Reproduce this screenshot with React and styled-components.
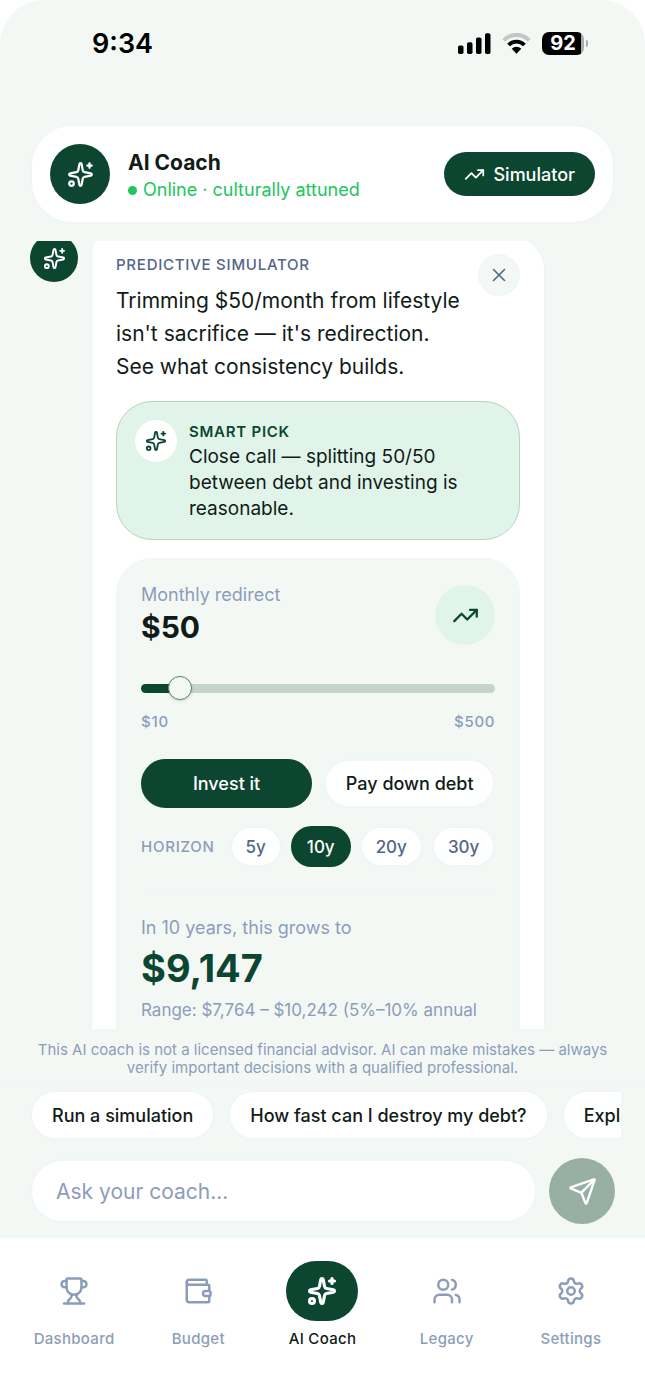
import React, { useState } from "react";
import styled, { createGlobalStyle } from "styled-components";
import {
    Send,
    Settings,
    Sparkles,
    TrendingUp,
    Trophy,
    Users,
    Wallet,
    X,
} from "lucide-react";

const forest = "#0c4631";
const page = "#f4f8f5";
const mint = "#e1f4ea";
const ink = "#111b17";
const muted = "#8c9dba";
const slate = "#536688";
const line = "#f0f5fa";

const GlobalStyle = createGlobalStyle`
    * {
        box-sizing: border-box;
    }
    body {
        margin: 0;
        background-color: white;
        color: ${ink};
        font-family: "Inter", "Liberation Sans", sans-serif;
    }
    button,
    input {
        font-family: inherit;
    }
    h1,
    h2,
    p {
        margin: 0;
    }
`;

const Screen = styled.div`
    height: 100vh;
    display: flex;
    flex-direction: column;
    background-color: ${page};
    border-radius: 44px 44px 0 0;
    overflow: hidden;
`;

const StatusBar = styled.div`
    flex: none;
    height: 124px;
    padding: 26px 57px 0 92px;
    display: flex;
    align-items: flex-start;
    justify-content: space-between;
    color: black;
`;

const Clock = styled.time`
    font-size: 27px;
    line-height: 36px;
    font-weight: 600;
`;

const StatusIcons = styled.div`
    height: 35px;
    display: flex;
    align-items: center;
    gap: 11px;
`;

const Battery = styled.div`
    display: flex;
    align-items: center;
    gap: 2px;
`;

const BatteryBody = styled.div`
    width: 42px;
    height: 23px;
    border-radius: 7px;
    background: linear-gradient(to right, black 92%, #a9adaa 92%);
    color: white;
    font-size: 20px;
    line-height: 23px;
    font-weight: 700;
    text-align: center;
`;

const BatteryTip = styled.div`
    width: 2px;
    height: 7px;
    border-radius: 0 3px 3px 0;
    background-color: #a9adaa;
`;

const Header = styled.header`
    flex: none;
    margin: 0 30px 17px;
    padding: 18px;
    display: flex;
    align-items: center;
    gap: 18px;
    background-color: white;
    border: 2px solid ${line};
    border-radius: 42px;
`;

const IconCircle = styled.div`
    flex: none;
    width: ${(props) => props.$size}px;
    height: ${(props) => props.$size}px;
    display: flex;
    align-items: center;
    justify-content: center;
    border-radius: 50%;
    background-color: ${(props) => props.$bg || forest};
    color: ${(props) => props.$color || "white"};
`;

const HeaderText = styled.div`
    flex: 1;
    padding-top: 4px;
`;

const Title = styled.h1`
    font-size: 21px;
    line-height: 28px;
    font-weight: 700;
`;

const Online = styled.p`
    display: flex;
    align-items: center;
    gap: 6px;
    font-size: 18px;
    line-height: 26px;
    color: #22c55e;

    &::before {
        content: "";
        width: 9px;
        height: 9px;
        border-radius: 50%;
        background-color: #22c55e;
    }
`;

const SimulatorButton = styled.button`
    height: 44px;
    padding: 0 20px;
    display: flex;
    align-items: center;
    gap: 8px;
    border: none;
    border-radius: 22px;
    background-color: ${forest};
    color: white;
    font-size: 18px;
    font-weight: 500;
`;

const Thread = styled.main`
    flex: 1;
    min-height: 0;
    padding: 0 30px;
    overflow: hidden;
`;

const Message = styled.div`
    margin-top: -7px;
    display: flex;
    align-items: flex-start;
    gap: 12px;
`;

const Bubble = styled.section`
    width: 78%;
    padding: 18px 24px 24px;
    background-color: white;
    border: 2px solid ${line};
    border-radius: 18px 36px 36px 36px;
`;

const BubbleTop = styled.div`
    display: flex;
    align-items: flex-start;
    justify-content: space-between;
`;

const Eyebrow = styled.h2`
    margin-bottom: 8px;
    font-size: 15px;
    line-height: 22px;
    font-weight: 500;
    letter-spacing: 0.05em;
    color: ${slate};
`;

const Lead = styled.p`
    font-size: 21px;
    line-height: 33px;
`;

const CloseButton = styled.button`
    flex: none;
    width: 42px;
    height: 42px;
    padding: 0;
    display: flex;
    align-items: center;
    justify-content: center;
    border: 1px solid ${line};
    border-radius: 50%;
    background-color: ${page};
    color: ${slate};
`;

const SmartPick = styled.div`
    margin-top: 18px;
    padding: 18px 18px 17px;
    display: flex;
    gap: 12px;
    background-color: ${mint};
    border: 1px solid #b5d3c5;
    border-radius: 36px;
`;

const PickLabel = styled.h2`
    font-size: 15px;
    line-height: 24px;
    font-weight: 600;
    letter-spacing: 0.05em;
    color: ${forest};
`;

const PickText = styled.p`
    font-size: 19px;
    line-height: 26px;
`;

const Panel = styled.div`
    margin-top: 18px;
    padding: 24px;
    background-color: ${page};
    border: 1px solid ${line};
    border-radius: 36px;
`;

const AmountRow = styled.div`
    display: flex;
    align-items: center;
    justify-content: space-between;
`;

const Caption = styled.label`
    display: block;
    font-size: 18px;
    line-height: 24px;
    color: ${muted};
`;

const Amount = styled.output`
    display: block;
    font-size: 30px;
    line-height: 40px;
    font-weight: 700;
`;

const Slider = styled.input`
    display: block;
    width: 100%;
    height: 24px;
    margin: 29px 0 11px;
    appearance: none;
    background: transparent;

    &::-webkit-slider-runnable-track {
        height: 9px;
        border-radius: 5px;
        background: linear-gradient(
            to right,
            ${forest} var(--fill),
            #c5d5cd var(--fill)
        );
    }

    &::-webkit-slider-thumb {
        appearance: none;
        width: 24px;
        height: 24px;
        margin-top: -8px;
        border: 1px solid #56856f;
        border-radius: 50%;
        background-color: ${page};
        box-shadow: 0 1px 3px rgba(0, 0, 0, 0.16);
    }
`;

const Limits = styled.div`
    display: flex;
    justify-content: space-between;
    font-size: 15px;
    line-height: 22px;
    font-weight: 500;
    letter-spacing: 0.05em;
    color: ${muted};
`;

const Choices = styled.div`
    margin-top: 26px;
    display: grid;
    grid-template-columns: 1fr 1fr;
    gap: 12px;
`;

const Choice = styled.button`
    height: 49px;
    padding: 0;
    border: 2px solid ${(props) => (props.$active ? forest : line)};
    border-radius: 25px;
    background-color: ${(props) => (props.$active ? forest : "white")};
    color: ${(props) => (props.$active ? "white" : ink)};
    font-size: 18px;
    font-weight: 500;
`;

const Horizon = styled.div`
    margin-top: 18px;
    padding-bottom: 24px;
    display: flex;
    align-items: center;
    gap: 9px;
    border-bottom: 1px solid ${line};
`;

const HorizonLabel = styled.span`
    flex: 1;
    font-size: 15px;
    font-weight: 500;
    letter-spacing: 0.05em;
    color: ${muted};
`;

const Year = styled.button`
    height: 41px;
    padding: 0 14px;
    border: 2px solid ${(props) => (props.$active ? forest : line)};
    border-radius: 21px;
    background-color: ${(props) => (props.$active ? forest : "white")};
    color: ${(props) => (props.$active ? "white" : slate)};
    font-size: 17px;
    font-weight: 500;
`;

const Result = styled.div`
    padding-top: 24px;
    color: ${muted};
`;

const ResultLabel = styled.p`
    font-size: 18px;
    line-height: 24px;
`;

const ResultValue = styled.p`
    font-size: 38px;
    line-height: 56px;
    font-weight: 700;
    color: ${forest};
`;

const ResultRange = styled.p`
    font-size: 17px;
    line-height: 28px;
`;

const Disclaimer = styled.p`
    flex: none;
    padding: 12px 30px 6px;
    border-bottom: 1px solid ${line};
    font-size: 15px;
    line-height: 18px;
    color: ${muted};
    text-align: center;
`;

const Composer = styled.div`
    flex: none;
    padding: 6px 24px 13px;
`;

const Prompts = styled.div`
    margin-bottom: 18px;
    padding-left: 6px;
    display: flex;
    gap: 13px;
    overflow: hidden;
`;

const Prompt = styled.button`
    flex: none;
    height: 50px;
    padding: 0 20px;
    border: 2px solid ${line};
    border-radius: 25px;
    background-color: white;
    color: ${ink};
    font-size: 18px;
    font-weight: 500;
`;

const AskForm = styled.form`
    padding: 0 6px;
    display: flex;
    align-items: center;
    gap: 12px;
`;

const AskInput = styled.input`
    flex: 1;
    min-width: 0;
    height: 64px;
    padding: 0 24px;
    border: 2px solid ${line};
    border-radius: 32px;
    background-color: white;
    color: ${ink};
    font-size: 21px;

    &::placeholder {
        color: ${muted};
        opacity: 1;
    }
`;

const SendButton = styled.button`
    width: 66px;
    height: 66px;
    padding: 0;
    display: flex;
    align-items: center;
    justify-content: center;
    border: none;
    border-radius: 50%;
    background-color: #97afa4;
    color: white;
`;

const Nav = styled.nav`
    flex: none;
    padding: 23px 12px 48px;
    display: grid;
    grid-template-columns: repeat(5, 1fr);
    background-color: white;
    border-top: 1px solid ${line};
`;

const NavItem = styled.a`
    display: flex;
    flex-direction: column;
    align-items: center;
    gap: 7px;
    color: ${(props) => (props.$active ? ink : muted)};
    font-size: 15px;
    line-height: 22px;
    font-weight: 500;
    letter-spacing: 0.02em;
    text-decoration: none;
`;

const NavIcon = styled.span`
    width: 72px;
    height: 60px;
    display: flex;
    align-items: center;
    justify-content: center;
    border-radius: 30px;
    background-color: ${(props) => (props.$active ? forest : "transparent")};
    color: ${(props) => (props.$active ? "white" : "inherit")};
`;

const Signal = () => (
    <svg width="33" height="21" viewBox="0 0 33 21">
        <rect x="0" y="12.5" width="5.5" height="8.5" rx="1.8" />
        <rect x="9" y="9.3" width="5.5" height="11.7" rx="1.8" />
        <rect x="18" y="4.5" width="5.5" height="16.5" rx="1.8" />
        <rect x="27" y="0.3" width="5.5" height="20.7" rx="1.8" />
    </svg>
);

const Wifi = () => (
    <svg width="29" height="21" viewBox="0 0 29 21" fill="none">
        <path
            d="M1.7 7.3a18 18 0 0 1 25.6 0"
            stroke="#c3c7c4"
            strokeWidth="4"
        />
        <path
            d="M6.6 12a11 11 0 0 1 15.8 0"
            stroke="black"
            strokeWidth="3.8"
        />
        <path d="M14.5 20.7l-4.8-5a7 7 0 0 1 9.6 0z" fill="black" />
    </svg>
);

const navItems = [
    { label: "Dashboard", icon: Trophy },
    { label: "Budget", icon: Wallet },
    { label: "AI Coach", icon: Sparkles },
    { label: "Legacy", icon: Users },
    { label: "Settings", icon: Settings },
];

const prompts = [
    "Run a simulation",
    "How fast can I destroy my debt?",
    "Explain investing",
];

const App = () => {
    const [amount, setAmount] = useState(50);
    const [plan, setPlan] = useState("Invest it");
    const [years, setYears] = useState(10);
    const fill = ((amount - 10) / 490) * 100;

    return (
        <>
            <GlobalStyle />
            <Screen>
                <StatusBar>
                    <Clock>9:34</Clock>
                    <StatusIcons>
                        <Signal />
                        <Wifi />
                        <Battery>
                            <BatteryBody>92</BatteryBody>
                            <BatteryTip />
                        </Battery>
                    </StatusIcons>
                </StatusBar>

                <Header>
                    <IconCircle $size={60}>
                        <Sparkles size={27} />
                    </IconCircle>
                    <HeaderText>
                        <Title>AI Coach</Title>
                        <Online>Online · culturally attuned</Online>
                    </HeaderText>
                    <SimulatorButton>
                        <TrendingUp size={21} />
                        Simulator
                    </SimulatorButton>
                </Header>

                <Thread>
                    <Message>
                        <IconCircle $size={48}>
                            <Sparkles size={23} />
                        </IconCircle>
                        <Bubble>
                            <BubbleTop>
                                <div>
                                    <Eyebrow>PREDICTIVE SIMULATOR</Eyebrow>
                                    <Lead>
                                        Trimming $50/month from lifestyle isn't
                                        sacrifice — it's redirection.
                                        <br />
                                        See what consistency builds.
                                    </Lead>
                                </div>
                                <CloseButton aria-label="Close">
                                    <X size={22} strokeWidth={1.75} />
                                </CloseButton>
                            </BubbleTop>

                            <SmartPick>
                                <IconCircle
                                    $size={42}
                                    $bg="white"
                                    $color={forest}
                                >
                                    <Sparkles size={22} />
                                </IconCircle>
                                <div>
                                    <PickLabel>SMART PICK</PickLabel>
                                    <PickText>
                                        Close call — splitting 50/50 between
                                        debt and investing is reasonable.
                                    </PickText>
                                </div>
                            </SmartPick>

                            <Panel>
                                <AmountRow>
                                    <div>
                                        <Caption htmlFor="redirect">
                                            Monthly redirect
                                        </Caption>
                                        <Amount>${amount}</Amount>
                                    </div>
                                    <IconCircle
                                        $size={60}
                                        $bg={mint}
                                        $color={forest}
                                    >
                                        <TrendingUp size={27} />
                                    </IconCircle>
                                </AmountRow>
                                <Slider
                                    id="redirect"
                                    type="range"
                                    min="10"
                                    max="500"
                                    value={amount}
                                    onChange={(e) =>
                                        setAmount(Number(e.target.value))
                                    }
                                    style={{ "--fill": `${fill}%` }}
                                />
                                <Limits>
                                    <span>$10</span>
                                    <span>$500</span>
                                </Limits>

                                <Choices>
                                    {["Invest it", "Pay down debt"].map((c) => (
                                        <Choice
                                            key={c}
                                            $active={plan === c}
                                            onClick={() => setPlan(c)}
                                        >
                                            {c}
                                        </Choice>
                                    ))}
                                </Choices>

                                <Horizon>
                                    <HorizonLabel>HORIZON</HorizonLabel>
                                    {[5, 10, 20, 30].map((y) => (
                                        <Year
                                            key={y}
                                            $active={years === y}
                                            onClick={() => setYears(y)}
                                        >
                                            {y}y
                                        </Year>
                                    ))}
                                </Horizon>

                                <Result>
                                    <ResultLabel>
                                        In {years} years, this grows to
                                    </ResultLabel>
                                    <ResultValue>$9,147</ResultValue>
                                    <ResultRange>
                                        Range: $7,764 – $10,242 (5%–10% annual
                                        return)
                                    </ResultRange>
                                </Result>
                            </Panel>
                        </Bubble>
                    </Message>
                </Thread>

                <Disclaimer>
                    This AI coach is not a licensed financial advisor. AI can
                    make mistakes — always verify important decisions with a
                    qualified professional.
                </Disclaimer>

                <Composer>
                    <Prompts>
                        {prompts.map((p) => (
                            <Prompt key={p}>{p}</Prompt>
                        ))}
                    </Prompts>
                    <AskForm onSubmit={(e) => e.preventDefault()}>
                        <AskInput
                            aria-label="Ask your coach"
                            placeholder="Ask your coach..."
                        />
                        <SendButton aria-label="Send">
                            <Send size={29} />
                        </SendButton>
                    </AskForm>
                </Composer>

                <Nav>
                    {navItems.map(({ label, icon: Icon }) => {
                        const active = label === "AI Coach";
                        return (
                            <NavItem key={label} href="#" $active={active}>
                                <NavIcon $active={active}>
                                    <Icon
                                        size={30}
                                        strokeWidth={active ? 2.5 : 2}
                                    />
                                </NavIcon>
                                {label}
                            </NavItem>
                        );
                    })}
                </Nav>
            </Screen>
        </>
    );
};

export default App;
